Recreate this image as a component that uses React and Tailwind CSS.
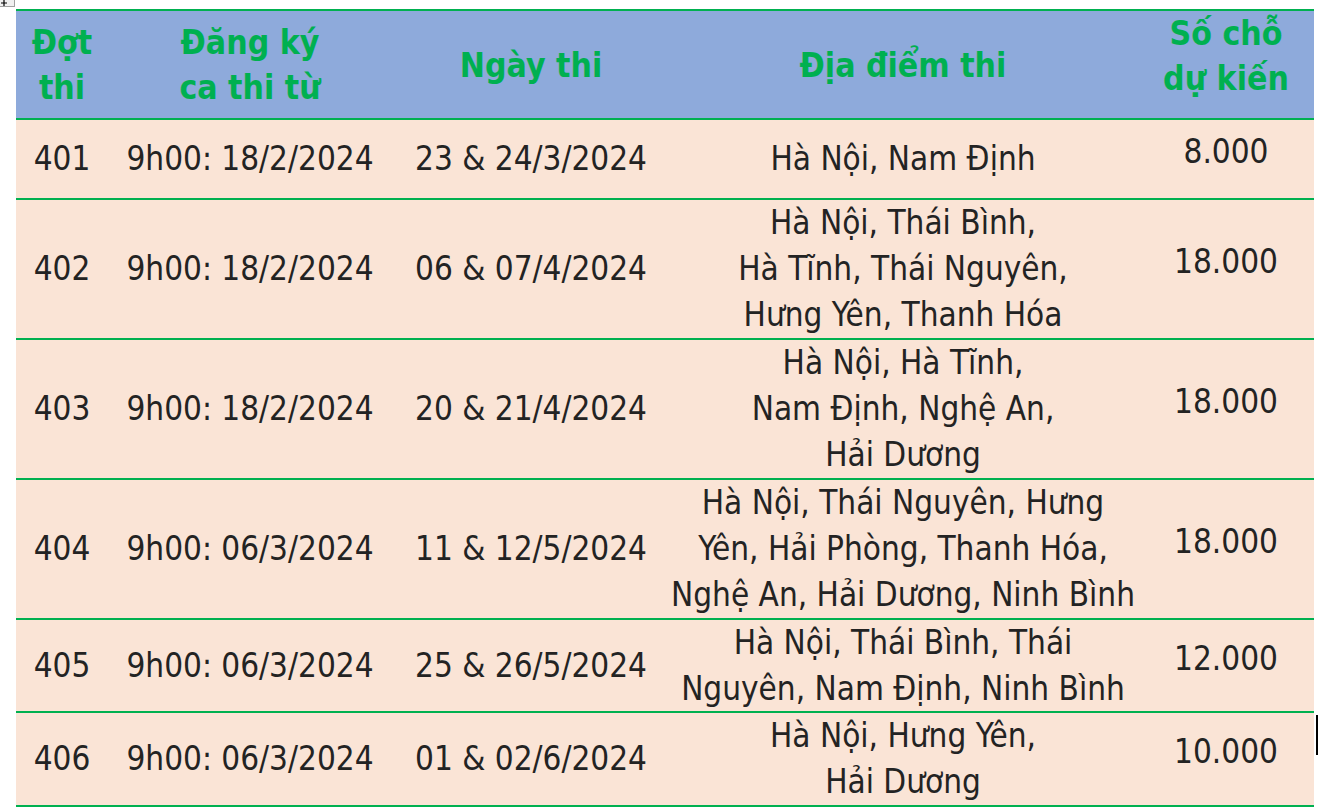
import React from "react";

const font = {
  fontFamily: "'DejaVu Sans Condensed', 'DejaVu Sans', sans-serif",
};

const rows = [
  { id: "401", reg: "9h00: 18/2/2024", date: "23 & 24/3/2024", place: ["Hà Nội, Nam Định"], seats: "8.000", h: "h-[80px]" },
  { id: "402", reg: "9h00: 18/2/2024", date: "06 & 07/4/2024", place: ["Hà Nội, Thái Bình,", "Hà Tĩnh, Thái Nguyên,", "Hưng Yên, Thanh Hóa"], seats: "18.000", h: "h-[140px]" },
  { id: "403", reg: "9h00: 18/2/2024", date: "20 & 21/4/2024", place: ["Hà Nội, Hà Tĩnh,", "Nam Định, Nghệ An,", "Hải Dương"], seats: "18.000", h: "h-[140px]" },
  { id: "404", reg: "9h00: 06/3/2024", date: "11 & 12/5/2024", place: ["Hà Nội, Thái Nguyên, Hưng", "Yên, Hải Phòng, Thanh Hóa,", "Nghệ An, Hải Dương, Ninh Bình"], seats: "18.000", h: "h-[140px]" },
  { id: "405", reg: "9h00: 06/3/2024", date: "25 & 26/5/2024", place: ["Hà Nội, Thái Bình, Thái", "Nguyên, Nam Định, Ninh Bình"], seats: "12.000", h: "h-[93px]" },
  { id: "406", reg: "9h00: 06/3/2024", date: "01 & 02/6/2024", place: ["Hà Nội, Hưng Yên,", "Hải Dương"], seats: "10.000", h: "h-[94px]" },
];

const cols = "grid grid-cols-[92px_284px_278px_466px_178px]";

export default function App() {
  return (
    <div className="relative w-[1322px] h-[808px] bg-white overflow-hidden" style={font}>
      {/* table move handle */}
      <div className="absolute left-0 top-0 w-[15px] h-[7px] bg-[#f0f0f0] border-r border-b border-[#a0a0a0] overflow-hidden">
        <svg width="14" height="7" viewBox="0 0 14 7" className="block">
          <path d="M4 0 V6 M1 3 H7" stroke="#000" strokeWidth="1.2" fill="none" />
        </svg>
      </div>
      {/* text cursor */}
      <div className="absolute left-[1316px] top-[715px] w-[2px] h-[40px] bg-black" />

      <div className="ml-[16px] mt-[9px] w-[1298px] flex flex-col text-[#232323]">
        <div className={`${cols} h-[111px] bg-[#8eaadb] border-t-[2px] border-b-[2px] border-[#00b050] text-[#00b050] font-bold text-[33.5px] leading-[45px] text-center`}>
          <div className="flex items-center justify-center">Đợt<br />thi</div>
          <div className="flex items-center justify-center">Đăng ký<br />ca thi từ</div>
          <div className="flex items-center justify-center">Ngày thi</div>
          <div className="flex items-center justify-center">Địa điểm thi</div>
          <div className="flex items-center justify-center pb-[18px] pl-[2px]">Số chỗ<br />dự kiến</div>
        </div>
        {rows.map((r) => (
          <div key={r.id} className={`${cols} ${r.h} bg-[#fae4d6] border-b-[2px] border-[#00b050] text-[33px] leading-[46px] text-center`}>
            <div className="flex items-center justify-center">{r.id}</div>
            <div className="flex items-center justify-center">{r.reg}</div>
            <div className="flex items-center justify-center">{r.date}</div>
            <div className="flex flex-col items-center justify-center whitespace-nowrap">
              {r.place.map((p, i) => (
                <div key={i}>{p}</div>
              ))}
            </div>
            <div className="flex items-center justify-center pb-[14px] pl-[2px]">{r.seats}</div>
          </div>
        ))}
      </div>
    </div>
  );
}
